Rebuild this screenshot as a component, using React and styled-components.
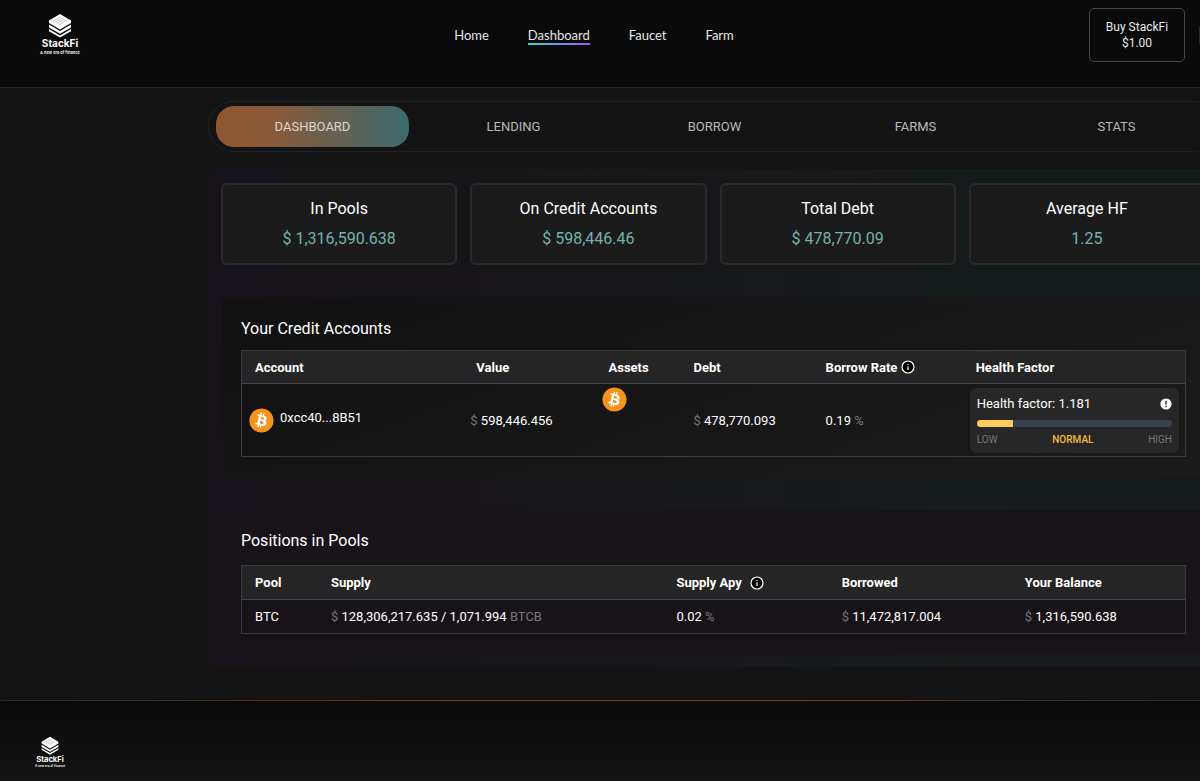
import React from "react";
import styled, { createGlobalStyle } from "styled-components";
import { FaBitcoin } from "react-icons/fa";

const GlobalStyle = createGlobalStyle`
  * {
    box-sizing: border-box;
  }
  body {
    margin: 0;
    background-color: #131313;
    color: #fff;
    font-family: Roboto, sans-serif;
    font-size: 13px;
    overflow-x: hidden;
  }
`;

const Page = styled.div`
  display: flex;
  flex-direction: column;
  min-width: 1218px;
  min-height: 100vh;
`;

const Header = styled.header`
  display: flex;
  justify-content: space-between;
  align-items: flex-start;
  height: 88px;
  padding: 8px 0 0 39px;
  background-color: #0a0a0a;
  border-bottom: 1px solid #242424;
`;

const LogoLink = styled.a`
  display: block;
  width: ${({ $small }) => ($small ? "32px" : "42px")};
  margin-top: 5px;
`;

const LogoSvg = styled.svg`
  display: block;
  width: 100%;
`;

const Nav = styled.nav`
  display: flex;
  gap: 39px;
  margin-top: 18px;
  padding-left: 18px;
`;

const NavLink = styled.a`
  height: 19px;
  color: #e4e4e4;
  font-family: Lato, sans-serif;
  font-size: 13px;
  line-height: 19px;
  text-decoration: none;
  border-bottom: 2px solid transparent;
  border-image: ${({ $active }) =>
    $active ? "linear-gradient(90deg, #4fd1c5, #8b5cf6) 1" : "none"};
`;

const Actions = styled.div`
  display: flex;
  align-items: center;
  gap: 14px;
`;

const BuyButton = styled.button`
  width: 96px;
  height: 54px;
  padding: 0;
  color: #e6e6e6;
  background-color: transparent;
  border: 1px solid #41474f;
  border-radius: 5px;
  font-family: Roboto, sans-serif;
  font-size: 12px;
  line-height: 16px;
`;

const WalletButton = styled.button`
  width: 19px;
  height: 22px;
  padding: 0;
  background-color: #1a1a1a;
  border: 1px solid #2b2b2b;
  border-radius: 4px;
`;

const Main = styled.main`
  flex: 1;
  margin: 13px 0 33px 208px;
`;

const Tabs = styled.div`
  display: grid;
  grid-template-columns: repeat(5, 1fr);
  column-gap: 8px;
  padding: 4px 4px 4px 7px;
  border: 1px solid #202122;
  border-radius: 26px;
`;

const Tab = styled.button`
  height: 41px;
  padding: 0;
  color: ${({ $active }) => ($active ? "#dcd8d2" : "#b9b9b9")};
  background: ${({ $active }) =>
    $active
      ? "linear-gradient(90deg, #8f5730 0%, #89593a 30%, #3c6a6c 100%)"
      : "none"};
  border: none;
  border-radius: 18px;
  font-family: Roboto, sans-serif;
  font-size: 13px;
`;

const Panel = styled.div`
  margin-top: 17px;
  padding: 14px 13px 12px;
  background: linear-gradient(90deg, #18131a 0%, #17161a 35%, #151b1c 80%);
  border-radius: 10px;
`;

const Stats = styled.div`
  display: grid;
  grid-template-columns: repeat(4, 1fr);
  gap: 13px;
`;

const StatCard = styled.div`
  height: 82px;
  padding-top: 12px;
  background-color: #1b1b1b;
  border: 2px solid #292929;
  border-radius: 6px;
  font-size: 16px;
  line-height: 24px;
  text-align: center;
`;

const StatValue = styled.div`
  margin-top: 6px;
  color: #75b1af;
`;

const CreditSection = styled.section`
  margin-top: 32px;
  padding: 20px 19px 20px 20px;
  background: linear-gradient(160deg, #111111, #1b1b1b);
  border-radius: 8px;
`;

const PoolSection = styled.section`
  margin-top: 33px;
  padding: 19px 19px 21px 20px;
  background: #181319;
`;

const SectionTitle = styled.h2`
  margin: 0 0 ${({ $gap }) => $gap}px;
  font-size: 16px;
  font-weight: 400;
  line-height: 24px;
`;

const Table = styled.table`
  width: 100%;
  border: 1px solid #373b42;
  border-collapse: collapse;
  table-layout: fixed;
`;

const Th = styled.th`
  width: ${({ $width }) => $width};
  height: ${({ $short }) => ($short ? "33px" : "34px")};
  padding: 0 0 0 13px;
  background-color: #242524;
  border-bottom: 1px solid #41444d;
  font-size: 13px;
  font-weight: 700;
  text-align: left;
  white-space: nowrap;
`;

const Td = styled.td`
  height: ${({ $short }) => ($short ? "34px" : "73px")};
  padding: 0 6px 0 ${({ $tight }) => ($tight ? "7px" : "13px")};
  vertical-align: ${({ $top }) => ($top ? "top" : "middle")};
  white-space: nowrap;
`;

const HeadLabel = styled.span`
  display: flex;
  align-items: center;
  gap: ${({ $gap }) => $gap}px;
`;

const Muted = styled.span`
  color: #777;
`;

const Account = styled.div`
  display: flex;
  align-items: center;
  gap: 6px;
`;

const AccountName = styled.span`
  padding-bottom: 6px;
`;

const Coin = styled(FaBitcoin)`
  display: block;
  width: 25px;
  height: 25px;
  margin-top: ${({ $top }) => ($top ? "3px" : "0")};
  color: #f7931a;
  background: radial-gradient(circle, #fff 60%, transparent 62%);
  border-radius: 50%;
`;

const HealthCard = styled.div`
  height: 65px;
  padding: 7px;
  background-color: #272727;
  border-radius: 7px;
`;

const HealthTitle = styled.div`
  display: flex;
  justify-content: space-between;
  align-items: center;
  height: 18px;
`;

const Track = styled.div`
  height: 7px;
  margin-top: 7px;
  overflow: hidden;
  background-color: #394050;
  border-radius: 4px;
`;

const Fill = styled.div`
  height: 100%;
  background-color: #ffcb57;
`;

const Levels = styled.div`
  display: flex;
  justify-content: space-between;
  margin-top: 6px;
  color: #777;
  font-size: 10px;
  line-height: 14px;
`;

const CurrentLevel = styled.span`
  color: #f5b93c;
  font-weight: 500;
`;

const Footer = styled.footer`
  height: 81px;
  padding: 30px 34px 0;
  background: linear-gradient(180deg, #0a0a0a, #131313);
  border-top: 1px solid;
  border-image: linear-gradient(90deg, #2c241d, #6f421d 40%, #5f4029 70%, #2c241d)
    1;
`;

const stats = [
  { label: "In Pools", value: "$ 1,316,590.638" },
  { label: "On Credit Accounts", value: "$ 598,446.46" },
  { label: "Total Debt", value: "$ 478,770.09" },
  { label: "Average HF", value: "1.25" },
];

const tabs = ["DASHBOARD", "LENDING", "BORROW", "FARMS", "STATS"];
const links = ["Home", "Dashboard", "Faucet", "Farm"];
const health = { factor: 1.181, percent: 18.5 };

const Logo = ({ small }) => (
  <LogoLink href="#" $small={small} aria-label="StackFi">
    <LogoSvg viewBox="0 0 42 42" fill="#fff">
      <path d="M21 1 L32 7.4 V10 L21 16.4 L10 10 V7.4 Z" />
      <path d="M10 11.6 L21 18 L32 11.6 V14.4 L21 20.8 L10 14.4 Z" />
      <path d="M10 16 L21 22.4 L32 16 V18.2 L21 24.6 L10 18.2 Z" />
      <path
        d="M13.5 8.6 L21.5 4 M15.5 9.7 L23.5 5.1 M17.5 10.8 L25.5 6.2 M19.5 11.9 L27.5 7.3"
        stroke="#888"
        strokeWidth="0.5"
      />
      <text
        x="21"
        y="33.5"
        fontFamily="Inter, sans-serif"
        fontSize="10"
        fontWeight="700"
        textAnchor="middle"
      >
        StackFi
      </text>
      <text
        x="21"
        y="40.5"
        fontFamily="Inter, sans-serif"
        fontSize="4"
        fontWeight="600"
        textAnchor="middle"
      >
        A new era of finance
      </text>
    </LogoSvg>
  </LogoLink>
);

const InfoIcon = () => (
  <svg width="14" height="14" viewBox="0 0 14 14">
    <circle cx="7" cy="7" r="6" fill="#000" stroke="#fff" strokeWidth="1.2" />
    <path d="M7 6.2 V10 M7 3.9 V5.1" stroke="#fff" strokeWidth="1.2" />
  </svg>
);

const AlertIcon = () => (
  <svg width="12" height="12" viewBox="0 0 12 12">
    <circle cx="6" cy="6" r="5.6" fill="#fff" />
    <path d="M6 2.8 V6.6 M6 7.8 V9.2" stroke="#222" strokeWidth="1.4" />
  </svg>
);

const HealthFactor = () => (
  <HealthCard>
    <HealthTitle>
      <span>Health factor: {health.factor}</span>
      <AlertIcon />
    </HealthTitle>
    <Track>
      <Fill style={{ width: `${health.percent}%` }} />
    </Track>
    <Levels>
      <span>LOW</span>
      <CurrentLevel>NORMAL</CurrentLevel>
      <span>HIGH</span>
    </Levels>
  </HealthCard>
);

const CreditAccounts = () => (
  <CreditSection>
    <SectionTitle $gap={9}>Your Credit Accounts</SectionTitle>
    <Table>
      <thead>
        <tr>
          <Th $short $width="23.5%">
            Account
          </Th>
          <Th $short $width="14%">
            Value
          </Th>
          <Th $short $width="9%">
            Assets
          </Th>
          <Th $short $width="14%">
            Debt
          </Th>
          <Th $short $width="15.9%">
            <HeadLabel $gap={4}>
              Borrow Rate <InfoIcon />
            </HeadLabel>
          </Th>
          <Th $short>Health Factor</Th>
        </tr>
      </thead>
      <tbody>
        <tr>
          <Td $tight>
            <Account>
              <Coin />
              <AccountName>0xcc40...8B51</AccountName>
            </Account>
          </Td>
          <Td $tight>
            <Muted>$</Muted> 598,446.456
          </Td>
          <Td $tight $top>
            <Coin $top />
          </Td>
          <Td>
            <Muted>$</Muted> 478,770.093
          </Td>
          <Td>
            0.19 <Muted>%</Muted>
          </Td>
          <Td $tight>
            <HealthFactor />
          </Td>
        </tr>
      </tbody>
    </Table>
  </CreditSection>
);

const PoolPositions = () => (
  <PoolSection>
    <SectionTitle $gap={12}>Positions in Pools</SectionTitle>
    <Table>
      <thead>
        <tr>
          <Th $width="8.1%">Pool</Th>
          <Th $width="36.6%">Supply</Th>
          <Th $width="17.5%">
            <HeadLabel $gap={8}>
              Supply Apy <InfoIcon />
            </HeadLabel>
          </Th>
          <Th $width="19.4%">Borrowed</Th>
          <Th>Your Balance</Th>
        </tr>
      </thead>
      <tbody>
        <tr>
          <Td $short>BTC</Td>
          <Td $short>
            <Muted>$</Muted> 128,306,217.635 / 1,071.994 <Muted>BTCB</Muted>
          </Td>
          <Td $short>
            0.02 <Muted>%</Muted>
          </Td>
          <Td $short>
            <Muted>$</Muted> 11,472,817.004
          </Td>
          <Td $short>
            <Muted>$</Muted> 1,316,590.638
          </Td>
        </tr>
      </tbody>
    </Table>
  </PoolSection>
);

const App = () => {
  return (
    <Page>
      <GlobalStyle />
      <Header>
        <Logo />
        <Nav>
          {links.map((link) => (
            <NavLink key={link} href="#" $active={link === "Dashboard"}>
              {link}
            </NavLink>
          ))}
        </Nav>
        <Actions>
          <BuyButton>
            Buy StackFi
            <br />
            $1.00
          </BuyButton>
          <WalletButton aria-label="Wallet" />
        </Actions>
      </Header>
      <Main>
        <Tabs>
          {tabs.map((tab) => (
            <Tab key={tab} $active={tab === "DASHBOARD"}>
              {tab}
            </Tab>
          ))}
        </Tabs>
        <Panel>
          <Stats>
            {stats.map((stat) => (
              <StatCard key={stat.label}>
                <div>{stat.label}</div>
                <StatValue>{stat.value}</StatValue>
              </StatCard>
            ))}
          </Stats>
          <CreditAccounts />
          <PoolPositions />
        </Panel>
      </Main>
      <Footer>
        <Logo small />
      </Footer>
    </Page>
  );
};

export default App;
